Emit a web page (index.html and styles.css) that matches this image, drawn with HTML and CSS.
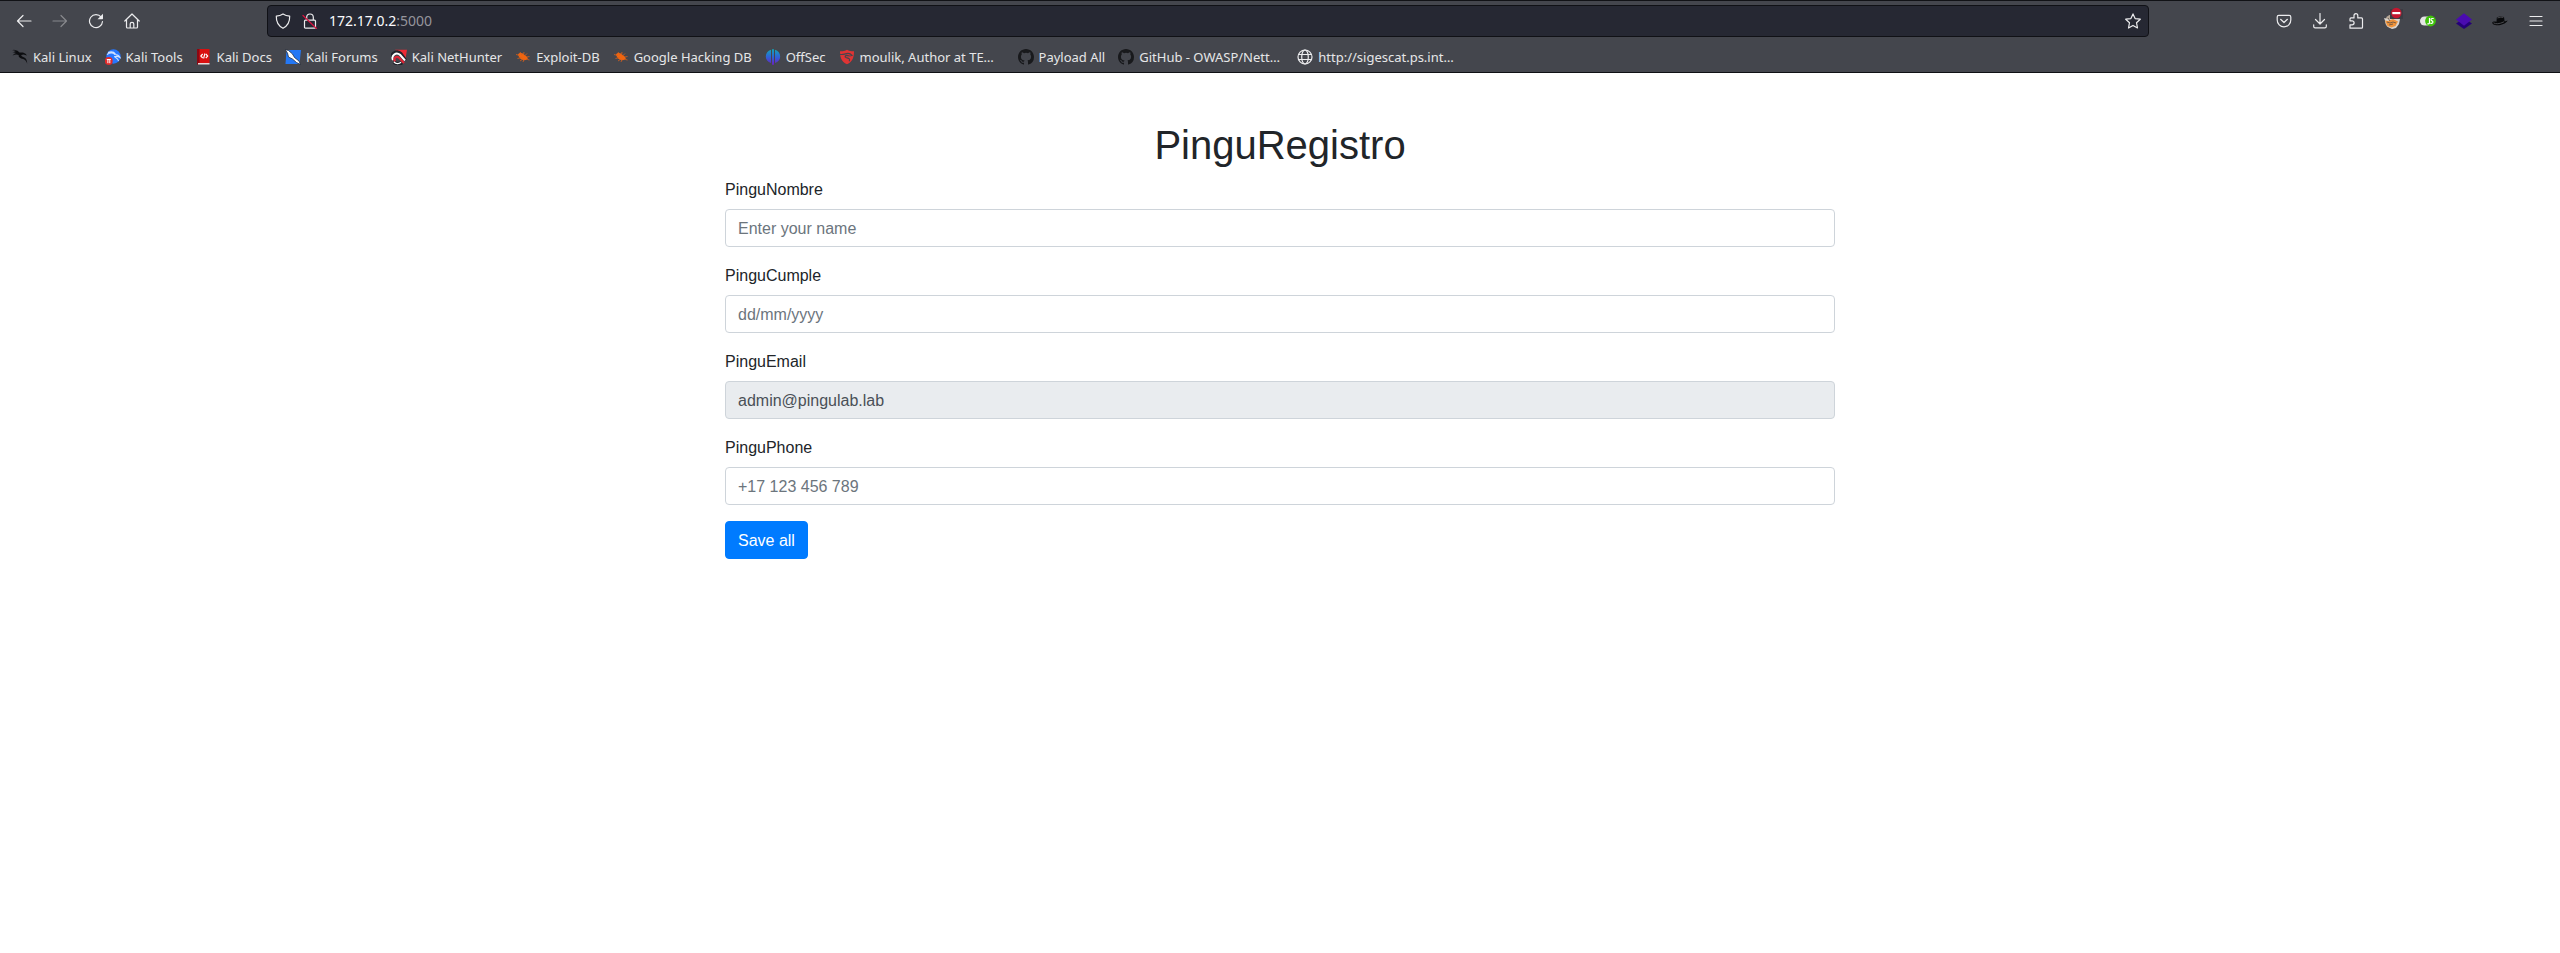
FILE: index.html
```html
<!DOCTYPE html>
<html lang="en">
<head>
<meta charset="utf-8">
<title>PinguRegistro</title>
<link rel="stylesheet" href="styles.css">
</head>
<body>
<svg class="defs" aria-hidden="true">
  <defs>
    <linearGradient id="offsec" x1="0" y1="0" x2="0" y2="1"><stop offset="0" stop-color="#12a5b8"/><stop offset=".5" stop-color="#2f62d8"/><stop offset="1" stop-color="#6a1fc0"/></linearGradient>
    <symbol id="bug" viewBox="0 0 16 16">
      <path d="M3 5.500C4.500 3.500 7 3.800 9 5.500l3 2.200 1 2.500-2.500.8C7.500 12 4 9.500 3 5.500z" fill="#f0650f"/>
      <path d="M1 5.500l4 1M2.500 9.500l4-1M5 12l3-2M8 13l1-3M5 3l2 3M9 3l-.5 3M12 4.500L9.500 7M12 8l2.500-.5M12.500 10.500l2 .5" fill="none" stroke="#d9601a" stroke-width=".8"/>
    </symbol>
    <symbol id="github" viewBox="0 0 16 16">
      <path fill="#18191c" fill-rule="evenodd" d="M8 0C3.580 0 0 3.580 0 8c0 3.540 2.290 6.530 5.470 7.590.4.070.55-.17.55-.38 0-.19-.01-.82-.01-1.490-2.010.37-2.530-.49-2.690-.94-.09-.23-.48-.94-.82-1.130-.28-.15-.68-.52-.01-.53.63-.01 1.080.58 1.230.82.72 1.210 1.870.87 2.330.66.070-.52.28-.87.51-1.070-1.780-.2-3.640-.89-3.640-3.950 0-.87.31-1.590.82-2.150-.08-.2-.36-1.020.08-2.120 0 0 .67-.21 2.200.82a7.600 7.600 0 0 1 4 0c1.530-1.040 2.200-.82 2.200-.82.44 1.100.16 1.920.08 2.120.51.56.82 1.270.82 2.150 0 3.070-1.870 3.750-3.650 3.950.29.25.54.73.54 1.480 0 1.070-.01 1.930-.01 2.200 0 .21.15.46.55.38A8 8 0 0 0 16 8c0-4.420-3.580-8-8-8z"/>
    </symbol>
  </defs>
</svg>

<header class="browser">
  <nav class="toolbar" aria-label="Navigation">
    <div class="tools">
      <button class="tool" type="button" aria-label="Back"><svg class="icon line" viewBox="0 0 16 16"><path d="M15 8H1.500M7 2.500L1.500 8 7 13.500"/></svg></button>
      <button class="tool dim" type="button" aria-label="Forward" disabled><svg class="icon line" viewBox="0 0 16 16"><path d="M1 8h13.500M9 2.500L14.500 8 9 13.500"/></svg></button>
      <button class="tool" type="button" aria-label="Reload"><svg class="icon line" viewBox="0 0 16 16"><path d="M13.200 4.200A6.500 6.500 0 1 0 14.500 8.500"/><path class="solid" d="M9.500 6.200h4.800c.4 0 .7-.3.700-.7V.8z"/></svg></button>
      <button class="tool" type="button" aria-label="Home"><svg class="icon line" viewBox="0 0 16 16"><path d="M.8 8L8 1l7.200 7M2.500 6.800V14c0 .6.400 1 1 1h9c.6 0 1-.4 1-1V6.800M6.200 15v-4c0-.9.800-1.600 1.800-1.600s1.800.7 1.800 1.600v4"/></svg></button>
    </div>
    <div class="spring"></div>
    <div class="address">
      <svg class="icon line" viewBox="0 0 16 16"><path d="M8 .9c2 1.300 4.300 2 6.700 2.200C14.900 8.600 13 12.800 8 15.300 3 12.800 1.100 8.600 1.300 3.100 3.700 2.900 6 2.200 8 .9z"/></svg>
      <svg class="icon line" viewBox="0 0 16 16"><path d="M4.700 7V4.300a3.300 3.300 0 0 1 6.600 0V7M3.500 7.200h9c.6 0 1 .4 1 1v6c0 .6-.4 1-1 1h-9c-.6 0-1-.4-1-1v-6c0-.6.400-1 1-1z"/><path class="strike" d="M1 2.500l13.500 13"/></svg>
      <span class="url">172.17.0.2<span class="port">:5000</span></span>
      <button class="star" type="button" aria-label="Bookmark this page"><svg class="icon line" viewBox="0 0 16 16"><path d="M8 .9l2.100 4.700 5.200.6-3.800 3.500 1 5.300L8 12.400 3.500 15l1-5.300L.7 6.200l5.200-.6z"/></svg></button>
    </div>
    <div class="spring"></div>
    <div class="tools">
      <button class="tool" type="button" aria-label="Pocket"><svg class="icon line" viewBox="0 0 16 16"><path d="M2.800 2.300h10.400c.9 0 1.600.7 1.600 1.600V7a6.800 6.800 0 0 1-13.600 0V3.900c0-.9.700-1.600 1.600-1.600z"/><path d="M4.600 6.300L8 9.500l3.400-3.200"/></svg></button>
      <button class="tool" type="button" aria-label="Downloads"><svg class="icon line" viewBox="0 0 16 16"><path d="M8 .5v10.300M3.500 6.500L8 11l4.500-4.500M1.700 11.800v1.700c0 .8.600 1.400 1.400 1.400h9.800c.8 0 1.400-.6 1.400-1.400v-1.700"/></svg></button>
      <button class="tool" type="button" aria-label="Extensions"><svg class="icon line" viewBox="0 0 16 16"><path d="M2 15.200v-3.400h2.100a2 2 0 0 0 0-4H2V5.900c0-.6.400-1 1-1h3V2.600a1.900 1.900 0 0 1 3.800 0v2.300h3.700c.6 0 1 .4 1 1v8.300c0 .6-.4 1-1 1z"/></svg></button>
      <button class="tool" type="button" aria-label="Proxy"><svg class="icon overflow" viewBox="0 0 16 16"><circle cx="8" cy="8.500" r="7" fill="#b7a796"/><path d="M0 5l4 1 9-1 3 1-1 5-3 4-4 1-5-3z" fill="#d9d4cf"/><path d="M1 7.500L3.500 13l4 1.500 4-1.500 2.500-4.500L9 6 4 8z" fill="#f0933a"/><path d="M3 9l3 1 3-1 3 1M4 5l2 3M5 12l4-1" stroke="#5e5147" fill="none" stroke-width=".8"/><path d="M6-4h13v10h-13z" fill="#3b3c43"/><circle cx="12.300" cy="0" r="5.200" fill="#c4162f"/><path d="M8.300-1h8v2.200h-8z" fill="#fff"/></svg></button>
      <button class="tool" type="button" aria-label="Toggle JavaScript"><svg class="icon" viewBox="0 0 16 16"><rect x="0" y="3.500" width="13" height="9" rx="4.500" fill="#e4e4e4"/><circle cx="10.500" cy="8" r="5.400" fill="#3fc20b"/><path d="M9.500 5v4.800q0 1-1 1h-1.200M13.700 5.500H12q-1 0-1 1.100 0 1 1 1.200.9.200.9 1.300t-1 1.200h-1.600" fill="none" stroke="#fff" stroke-width="1.200"/></svg></button>
      <button class="tool" type="button" aria-label="Wappalyzer"><svg class="icon" viewBox="0 0 16 16"><path d="M0 10.500L8 5l8 5.500L8 16z" fill="#250078"/><path d="M0 6.500L8 .3l8 6.200-8 6.200z" fill="#4a0bb0"/></svg></button>
      <button class="tool" type="button" aria-label="Hat"><svg class="icon" viewBox="0 0 16 16"><path d="M.3 9.500C0 11.300 3 12.700 7 12.200c4-.4 8-2.700 8.600-4.700-1 .5-2 .8-3 .9L12 4C9.500 3 6.500 3.300 4.800 4.500l-.3 4.300C2.500 8.300.8 8.500.3 9.500z" fill="#08090b"/><path d="M5.500 5c2-.9 4-1 5.800-.5M1.500 9.800c2 1.500 6 1.300 10.500-1" stroke="#5a5b60" fill="none" stroke-width=".8"/></svg></button>
      <button class="tool" type="button" aria-label="Menu"><svg class="icon line" viewBox="0 0 16 16"><path d="M2 3.500h12M2 8h12M2 12.500h12"/></svg></button>
    </div>
  </nav>

  <nav class="bookmarks" aria-label="Bookmarks">
    <a class="bookmark" href="#"><svg class="icon" viewBox="0 0 16 16"><path d="M0 1.200l3.500.8L1.200.6 5.500 1.800l2 1.600 3.500.1 2.500 1.200 1.500 1.800-3.500-.9-2.300.5c.2 1.500 1.500 1.700 3 2.300 1.800.8 3 2.600 3 6.400-.8-2.500-1.800-3.900-4-4.700C8 9.300 6.300 8.300 6.600 6 4.600 5 3 5.200.6 6.600 1.800 4.800 3 4.200 4.600 4L.3 3.400l3.500-.5z" fill="#0c0d10"/></svg>Kali Linux</a>
    <a class="bookmark" href="#"><svg class="icon" viewBox="0 0 16 16"><circle cx="8.500" cy="7.500" r="7.200" fill="#2777ff"/><path d="M2 5.500c3-2 6-2 8 0 2.500 0 4 1 5 3-2-1.300-4-1.300-5.500-.6M3 3.500c3-1 6-.5 7.500 1.500M9.500 7c0 2 3.500 1.500 4 5" stroke="#cfe1ff" fill="none" stroke-width="1.100"/><circle cx="3.800" cy="12" r="3.900" fill="#e02a2a"/><path d="M1.800 10.500h4M2.900 10.500v3.700M4.800 10.500v3.700" stroke="#fff" fill="none"/></svg>Kali Tools</a>
    <a class="bookmark" href="#"><svg class="icon" viewBox="0 0 16 16"><path d="M1 0h12.500v14H1z" fill="#d91010"/><path d="M1 0h2.500v15.500H1z" fill="#8c0712"/><path d="M2 14h11.500v1.500H2z" fill="#e8d9d9"/><path d="M6.700 5L4.800 7l1.900 2M9.800 5l1.900 2-1.900 2M8.900 4.500L7.600 9.500" stroke="#fff" fill="none" stroke-width="1.100"/></svg>Kali Docs</a>
    <a class="bookmark" href="#"><svg class="icon" viewBox="0 0 16 16"><path d="M1.500 1H16l-1.500 14H.5z" fill="#2478f5"/><path d="M0 .5l3.500 1 4 3.500 2 3.500 4.500 3.500 1.500 3.500-4-2-4-3.500-4-2L2.500 4z" fill="#fff" stroke="#17202e" stroke-width=".7"/></svg>Kali Forums</a>
    <a class="bookmark" href="#"><svg class="icon" viewBox="0 0 16 16"><path d="M4 .8h12L14.500 10 10 5z" fill="#ee2b35"/><path d="M1 8C1 3 7 1.500 10 5l4.500 6.500M3 13c2 2.500 6 2 8 .5" fill="none" stroke="#20222a" stroke-width="3.500"/><path d="M2 11C0 6.500 5 2.500 9 5.800l5 5.700" fill="none" stroke="#fff" stroke-width="2"/><path d="M4 12.500C2 8.500 5.500 6.500 8.500 9l4.500 5" fill="none" stroke="#dc2435" stroke-width="2.200"/><path d="M3 13c2 2 5 2 7 .3" fill="none" stroke="#fff" stroke-width="1.500"/></svg>Kali NetHunter</a>
    <a class="bookmark" href="#"><svg class="icon"><use href="#bug"/></svg>Exploit-DB</a>
    <a class="bookmark" href="#"><svg class="icon"><use href="#bug"/></svg>Google Hacking DB</a>
    <a class="bookmark" href="#"><svg class="icon" viewBox="0 0 16 16"><path d="M6 .8v13.200C2.800 13 .8 10.500.8 7.500S2.800 1.800 6 .8zM10 .8v13.200c3.200-1 5.200-3.500 5.200-6.500S13.200 1.800 10 .8zM7 .3h2v15.500H7z" fill="url(#offsec)"/></svg>OffSec</a>
    <a class="bookmark cropped" href="#"><svg class="icon" viewBox="0 0 16 16"><path d="M1 2.300C4 2.300 6 1.800 8 .8c2 1 4 1.500 7 1.500 0 6-1.200 10.200-7 13C2.200 12.500 1 8.300 1 2.300z" fill="#df3434"/><path d="M1 5.200c3 1.200 4.500-.8 8-.8 2 0 3 .8 4 2l-2.500.6-2.500-.6C6 6.500 5.500 7.800 7 8.500c2.500.8 4.500.8 3.200 3.800" fill="none" stroke="#44464d" stroke-width="1.200"/></svg><span>moulik, Author at TE…</span></a>
    <a class="bookmark" href="#"><svg class="icon"><use href="#github"/></svg>Payload All</a>
    <a class="bookmark cropped" href="#"><svg class="icon"><use href="#github"/></svg><span>GitHub - OWASP/Nett…</span></a>
    <a class="bookmark" href="#"><svg class="icon line" viewBox="0 0 16 16"><circle cx="8" cy="8" r="7"/><ellipse cx="8" cy="8" rx="3.300" ry="7"/><path d="M1.800 5.500h12.400M1.800 10.500h12.400"/></svg>http://sigescat.ps.int…</a>
  </nav>
</header>

<main class="container">
  <h1>PinguRegistro</h1>
  <form>
    <div class="group">
      <label for="name">PinguNombre</label>
      <input class="control" id="name" type="text" placeholder="Enter your name">
    </div>
    <div class="group">
      <label for="birthday">PinguCumple</label>
      <input class="control" id="birthday" type="text" placeholder="dd/mm/yyyy">
    </div>
    <div class="group">
      <label for="email">PinguEmail</label>
      <input class="control" id="email" type="email" value="admin@pingulab.lab" readonly>
    </div>
    <div class="group">
      <label for="phone">PinguPhone</label>
      <input class="control" id="phone" type="text" placeholder="+17 123 456 789">
    </div>
    <button class="save" type="button">Save all</button>
  </form>
</main>
</body>
</html>
```

FILE: styles.css
```css
*,
*::before,
*::after {
  box-sizing: border-box;
}

body {
  margin: 0;
  background: #fff;
  color: #212529;
  font: 16px/24px "Liberation Sans", Arial, sans-serif;
}

button {
  border: 0;
  padding: 0;
  background: none;
  color: inherit;
  font: inherit;
}

.defs {
  position: absolute;
  width: 0;
  height: 0;
}

/* Browser window */
.browser {
  background: #44464d;
  border-top: 1px solid #111216;
  border-bottom: 1px solid #0f1014;
  color: #e6e6e8;
  font: 13px/18px "Noto Sans", sans-serif;
}

.toolbar {
  display: flex;
  align-items: center;
  height: 40px;
  padding: 0 6px;
}

.tools {
  display: flex;
}

.tool {
  display: flex;
  align-items: center;
  justify-content: center;
  width: 36px;
  height: 32px;
}

.dim {
  opacity: 0.4;
}

.spring {
  flex: 0 1 117px;
}

.address {
  display: flex;
  flex: 1;
  align-items: center;
  gap: 11px;
  height: 32px;
  padding: 0 7px;
  border: 1px solid #101116;
  border-radius: 4px;
  background: #262833;
}

.url {
  flex: 1;
  color: #fbfbfe;
  font-size: 14px;
}

.port {
  color: #95959c;
}

.star {
  display: flex;
}

.icon {
  flex: none;
  width: 16px;
  height: 16px;
}

.line {
  fill: none;
  stroke: #ececee;
  stroke-width: 1.2;
  stroke-linecap: round;
  stroke-linejoin: round;
}

.solid {
  fill: #ececee;
  stroke: none;
}

.strike {
  stroke: #d8123f;
}

.overflow {
  overflow: visible;
}

.bookmarks {
  display: flex;
  gap: 13px;
  height: 31px;
  padding: 0 12px;
  align-items: center;
}

.bookmark {
  display: flex;
  flex: none;
  align-items: center;
  gap: 5px;
  color: inherit;
  text-decoration: none;
  white-space: nowrap;
}

.cropped span {
  width: 145px;
}

/* Registration form */
.container {
  max-width: 1140px;
  margin: 48px auto 0;
  padding: 0 15px;
}

h1 {
  margin: 0 0 8px;
  font-size: 40px;
  font-weight: 500;
  line-height: 48px;
  text-align: center;
}

.group {
  margin-bottom: 16px;
}

label {
  display: block;
  margin-bottom: 7px;
  padding-top: 1px;
}

.control {
  display: block;
  width: 100%;
  height: 38px;
  padding: 7px 12px 5px;
  border: 1px solid #ced4da;
  border-radius: 4px;
  background: #fff;
  color: #495057;
  font: inherit;
}

.control::placeholder {
  color: #6c757d;
  opacity: 1;
}

.control:read-only {
  background: #e9ecef;
}

.save {
  padding: 7px 12px 5px;
  border: 1px solid #007bff;
  border-radius: 4px;
  background: #007bff;
  color: #fff;
}
```
